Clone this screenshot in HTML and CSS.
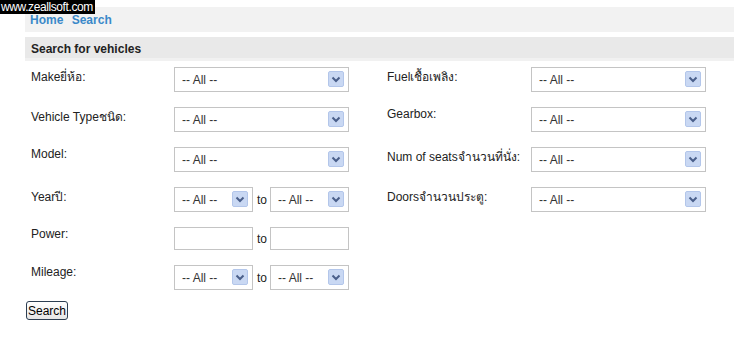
FILE: index.html
```html
<!DOCTYPE html>
<html lang="th">
<head>
    <meta charset="UTF-8">
    <title>Search for vehicles</title>
    <link rel="stylesheet" href="styles.css">
</head>
<body>
    <div class="watermark">www.zeallsoft.com</div>
    <div class="page">
        <div class="nav">
            <a href="#">Home</a>
            <a href="#">Search</a>
        </div>
        <div class="section-title">Search for vehicles</div>
        <form class="search-form">
            <div class="grid">
                <label>Makeยี่ห้อ:</label>
                <span class="select wide"><select><option>-- All --</option></select><svg viewBox="0 0 16 16"><rect x="0.5" y="0.5" width="15" height="15" rx="1.5"/><path d="M4.5 6.5 L8 10 L11.5 6.5"/></svg></span>
                <label>Fuelเชื้อเพลิง:</label>
                <span class="select wide"><select><option>-- All --</option></select><svg viewBox="0 0 16 16"><rect x="0.5" y="0.5" width="15" height="15" rx="1.5"/><path d="M4.5 6.5 L8 10 L11.5 6.5"/></svg></span>

                <label>Vehicle Typeชนิด:</label>
                <span class="select wide"><select><option>-- All --</option></select><svg viewBox="0 0 16 16"><rect x="0.5" y="0.5" width="15" height="15" rx="1.5"/><path d="M4.5 6.5 L8 10 L11.5 6.5"/></svg></span>
                <label>Gearbox:</label>
                <span class="select wide"><select><option>-- All --</option></select><svg viewBox="0 0 16 16"><rect x="0.5" y="0.5" width="15" height="15" rx="1.5"/><path d="M4.5 6.5 L8 10 L11.5 6.5"/></svg></span>

                <label>Model:</label>
                <span class="select wide"><select><option>-- All --</option></select><svg viewBox="0 0 16 16"><rect x="0.5" y="0.5" width="15" height="15" rx="1.5"/><path d="M4.5 6.5 L8 10 L11.5 6.5"/></svg></span>
                <label>Num of seatsจำนวนที่นั่ง:</label>
                <span class="select wide"><select><option>-- All --</option></select><svg viewBox="0 0 16 16"><rect x="0.5" y="0.5" width="15" height="15" rx="1.5"/><path d="M4.5 6.5 L8 10 L11.5 6.5"/></svg></span>

                <label>Yearปี:</label>
                <span class="range">
                    <span class="select half"><select><option>-- All --</option></select><svg viewBox="0 0 16 16"><rect x="0.5" y="0.5" width="15" height="15" rx="1.5"/><path d="M4.5 6.5 L8 10 L11.5 6.5"/></svg></span>
                    <span class="to">to</span>
                    <span class="select half"><select><option>-- All --</option></select><svg viewBox="0 0 16 16"><rect x="0.5" y="0.5" width="15" height="15" rx="1.5"/><path d="M4.5 6.5 L8 10 L11.5 6.5"/></svg></span>
                </span>
                <label>Doorsจำนวนประตู:</label>
                <span class="select wide"><select><option>-- All --</option></select><svg viewBox="0 0 16 16"><rect x="0.5" y="0.5" width="15" height="15" rx="1.5"/><path d="M4.5 6.5 L8 10 L11.5 6.5"/></svg></span>

                <label>Power:</label>
                <span class="range">
                    <input type="text" class="half-input">
                    <span class="to">to</span>
                    <input type="text" class="half-input">
                </span>
                <span></span>
                <span></span>

                <label>Mileage:</label>
                <span class="range">
                    <span class="select half"><select><option>-- All --</option></select><svg viewBox="0 0 16 16"><rect x="0.5" y="0.5" width="15" height="15" rx="1.5"/><path d="M4.5 6.5 L8 10 L11.5 6.5"/></svg></span>
                    <span class="to">to</span>
                    <span class="select half"><select><option>-- All --</option></select><svg viewBox="0 0 16 16"><rect x="0.5" y="0.5" width="15" height="15" rx="1.5"/><path d="M4.5 6.5 L8 10 L11.5 6.5"/></svg></span>
                </span>
                <span></span>
                <span></span>
            </div>
            <button type="submit" class="search-btn">Search</button>
        </form>
    </div>
</body>
</html>
```

FILE: styles.css
```css
body {
    margin: 0;
    padding: 0;
    background-color: #ffffff;
    color: #222222;
    font-family: "Liberation Sans", Arial, "DejaVu Sans", sans-serif;
    font-size: 12px;
}

.watermark {
    position: absolute;
    top: 0;
    left: 0;
    background-color: #000000;
    color: #ffffff;
    font-size: 12px;
    letter-spacing: -0.4px;
    line-height: 14px;
    padding: 0 2px 0 1px;
}

.page {
    padding: 7px 0 0 25px;
}

.nav {
    height: 25px;
    box-sizing: border-box;
    padding: 6px 0 0 5px;
    line-height: 15px;
    background-color: #f2f2f2;
}

.nav a {
    color: #3a89c9;
    font-weight: bold;
    text-decoration: none;
    margin-right: 5px;
}

.section-title {
    margin-top: 5px;
    height: 21px;
    line-height: 25px;
    background-color: #e9e9e9;
    border-bottom: 3px solid #f1f1f1;
    padding-left: 6px;
    font-weight: bold;
    color: #222222;
}

.search-form {
    padding-top: 6px;
}

.grid {
    display: grid;
    grid-template-columns: 143px 213px 144px 175px;
    row-gap: 15px;
    padding-left: 6px;
    align-items: start;
}

.grid label {
    color: #222222;
}

.select {
    position: relative;
    display: block;
    height: 25px;
}

.select.wide {
    width: 175px;
}

.select.half {
    width: 80px;
}

.select select {
    appearance: none;
    -webkit-appearance: none;
    width: 100%;
    height: 25px;
    margin: 0;
    padding: 0 0 0 7px;
    border: 1px solid #c4c4c4;
    border-radius: 0;
    background-color: #ffffff;
    color: #333333;
    font-family: inherit;
    font-size: 12px;
}

.select svg {
    position: absolute;
    right: 5px;
    top: 4px;
    width: 16px;
    height: 16px;
    pointer-events: none;
}

.select svg rect {
    fill: #c9d8f3;
    stroke: #b3c6ea;
}

.select svg path {
    fill: none;
    stroke: #4a5f8a;
    stroke-width: 2;
}

.range {
    display: flex;
    align-items: center;
    width: 175px;
}

.to {
    margin: 0 3px 0 4px;
    color: #222222;
}

.half-input {
    width: 79px;
    height: 23px;
    margin: 0;
    padding: 0 3px;
    border: 1px solid #c4c4c4;
    box-sizing: border-box;
    font-family: inherit;
    font-size: 12px;
}

.search-btn {
    margin: 11px 0 0 1px;
    height: 19px;
    padding: 0 1px;
    border: 1px solid #2c3e52;
    border-radius: 3px;
    background: linear-gradient(#ffffff, #e6e6e6);
    color: #000000;
    font-family: inherit;
    font-size: 12px;
    line-height: 16px;
    cursor: pointer;
}
```
